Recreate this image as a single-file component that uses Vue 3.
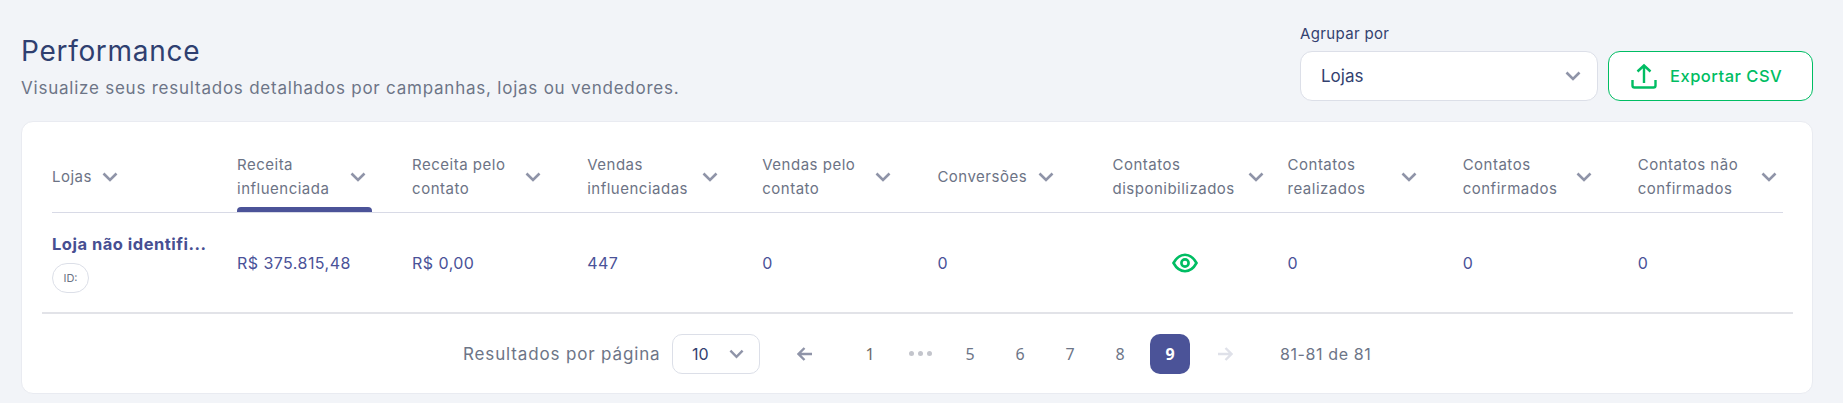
<script setup>
const cols = [
  { lines: ['Lojas'], w: 50 },
  { lines: ['Receita', 'influenciada'], w: 113, active: true },
  { lines: ['Receita pelo', 'contato'], w: 113 },
  { lines: ['Vendas', 'influenciadas'], w: 115 },
  { lines: ['Vendas pelo', 'contato'], w: 113 },
  { lines: ['Conversões'], w: 101 },
  { lines: ['Contatos', 'disponibilizados'], w: 136 },
  { lines: ['Contatos', 'realizados'], w: 113 },
  { lines: ['Contatos', 'confirmados'], w: 113 },
  { lines: ['Contatos não', 'confirmados'], w: 123 },
]
const values = ['R$ 375.815,48', 'R$ 0,00', '447', '0', '0', null, '0', '0', '0']
const pages = ['5', '6', '7', '8']
</script>

<template>
  <div class="page">
    <header class="top">
      <div>
        <h1 class="title">Performance</h1>
        <p class="sub">Visualize seus resultados detalhados por campanhas, lojas ou vendedores.</p>
      </div>
      <div class="controls">
        <div class="field">
          <label class="label">Agrupar por</label>
          <div class="select">
            <span>Lojas</span>
            <svg class="chev" viewBox="0 0 16 10"><path d="M1.5 1.5 8 8l6.5-6.5" /></svg>
          </div>
        </div>
        <button class="export">
          <svg class="upload" viewBox="0 0 26 26" fill="none">
            <path d="M13 20V3M6.5 8.500 13 2.500l6.500 6" />
            <path d="M1.500 17v5.500a2 2 0 0 0 2 2h19a2 2 0 0 0 2-2V17" />
          </svg>
          <span>Exportar CSV</span>
        </button>
      </div>
    </header>

    <section class="card">
      <div class="thead">
        <div v-for="c in cols" :key="c.lines[0] + c.w" class="th">
          <div class="th-label" :style="{ width: c.w + 'px' }">
            <span v-for="l in c.lines" :key="l">{{ l }}</span>
          </div>
          <svg class="chev" viewBox="0 0 16 10"><path d="M1.5 1.5 8 8l6.5-6.5" /></svg>
          <i v-if="c.active" class="bar"></i>
        </div>
      </div>
      <div class="row">
        <div class="store">
          <strong>Loja não identifi...</strong>
          <span class="chip">ID:</span>
        </div>
        <div v-for="(v, i) in values" :key="i" class="td">
          <template v-if="v !== null">{{ v }}</template>
          <svg v-else class="eye" viewBox="0 0 26 20" fill="none">
            <path d="M1.5 10C4.5 4.6 8.4 1.8 13 1.8S21.5 4.6 24.5 10C21.5 15.4 17.6 18.2 13 18.2S4.5 15.4 1.5 10Z" />
            <circle cx="13" cy="10" r="3.6" />
          </svg>
        </div>
      </div>
      <footer class="foot">
        <span class="foot-label">Resultados por página</span>
        <div class="size">
          <span>10</span>
          <svg class="chev" viewBox="0 0 16 10"><path d="M1.5 1.5 8 8l6.5-6.5" /></svg>
        </div>
        <svg class="arrow left" viewBox="0 0 16 14" fill="none"><path d="M15 7H2M7.5 1 1.5 7l6 6" /></svg>
        <span class="pg first">1</span>
        <span class="pg dots"><i></i><i></i><i></i></span>
        <span v-for="p in pages" :key="p" class="pg">{{ p }}</span>
        <span class="pg current">9</span>
        <svg class="arrow right" viewBox="0 0 16 14" fill="none"><path d="M1 7h13M8.500 1l6 6-6 6" /></svg>
        <span class="range">81-81 de 81</span>
      </footer>
    </section>
  </div>
</template>

<style>
html, body { margin: 0; background: #f2f4f8; }
</style>

<style scoped>
.page {
  box-sizing: border-box;
  width: 1843px;
  height: 403px;
  padding: 0 30px 0 21px;
  background: #f2f4f8;
  font-family: Inter, "Liberation Sans", sans-serif;
  overflow: hidden;
}
.top { display: flex; justify-content: space-between; height: 121px; }
.title {
  margin: 33px 0 0;
  font-size: 28px;
  line-height: 36px;
  font-weight: 400;
  color: #2f3f70;
  letter-spacing: 0.7px;
}
.sub {
  margin: 7px 0 0;
  font-size: 17px;
  line-height: 24px;
  color: #6d7587;
  letter-spacing: 0.77px;
}
.controls { display: flex; align-items: flex-end; gap: 10px; height: 101px; box-sizing: border-box; }
.label { display: block; font-size: 15px; line-height: 20px; margin-bottom: 7px; color: #33416f; letter-spacing: 0.35px; }
.select {
  box-sizing: border-box;
  width: 298px;
  height: 50px;
  display: flex;
  align-items: center;
  justify-content: space-between;
  padding: 0 16px 0 20px;
  background: #fff;
  border: 1px solid #dcdfe8;
  border-radius: 12px;
  font-size: 17px;
  color: #33416f;
}
.chev { width: 16px; height: 10px; flex: none; fill: none; stroke: #8f94a8; stroke-width: 2.6; }
.export {
  box-sizing: border-box;
  width: 205px;
  height: 50px;
  display: flex;
  align-items: center;
  padding: 0 0 0 22px;
  gap: 13px;
  background: #fff;
  border: 1px solid #00bd63;
  border-radius: 12px;
  font: 500 16.5px Inter, "Liberation Sans", sans-serif;
  letter-spacing: 0.5px;
  color: #00bd63;
}
.upload { width: 26px; height: 26px; stroke: #00bd63; stroke-width: 2.4; }
.card {
  box-sizing: border-box;
  height: 273px;
  padding: 0 19px 0 20px;
  background: #fff;
  border: 1px solid #e9ebf1;
  border-radius: 12px;
}
.thead, .row {
  display: grid;
  grid-template-columns: 185px repeat(8, 175.1px) 146px;
}
.thead { margin: 0 10px; height: 90px; align-items: end; border-bottom: 1px solid #d8dae6; }
.th { position: relative; display: flex; align-items: center; height: 60px; margin-bottom: 5px; }
.th-label {
  display: flex;
  flex-direction: column;
  flex: none;
  font-size: 15px;
  line-height: 24px;
  letter-spacing: 0.5px;
  color: #6c7385;
}
.th-label span { white-space: nowrap; }
.bar {
  position: absolute;
  left: 0;
  bottom: -5px;
  width: 135px;
  height: 5px;
  border-radius: 4px 4px 0 0;
  background: #4b5398;
}
.row {
  height: 99px;
  padding-left: 10px;
  align-items: center;
  border-bottom: 2px solid #e2e3e8;
}
.store { display: flex; flex-direction: column; align-items: flex-start; gap: 8px; }
.store strong {
  font-size: 16.5px;
  line-height: 22px;
  font-weight: 700;
  letter-spacing: 0.5px;
  color: #474f92;
  white-space: nowrap;
}
.chip {
  box-sizing: border-box;
  width: 37px;
  height: 30px;
  display: flex;
  align-items: center;
  justify-content: center;
  border: 1px solid #dcdfe8;
  border-radius: 15px;
  font-size: 11px;
  color: #6c7385;
}
.td { font-size: 16px; letter-spacing: 0.45px; color: #4a5298; }
.eye { display: block; width: 26px; height: 20px; margin-left: 60px; stroke: #00bd63; stroke-width: 2.6; }
.foot { display: flex; align-items: center; height: 79px; padding-left: 421px; }
.foot-label { width: 209px; flex: none; font-size: 17px; color: #6d7587; letter-spacing: 0.85px; white-space: nowrap; }
.size {
  box-sizing: border-box;
  width: 88px;
  height: 40px;
  display: flex;
  align-items: center;
  justify-content: space-between;
  padding: 0 15px 0 19px;
  border: 1px solid #dcdfe8;
  border-radius: 10px;
  font-size: 16px;
  color: #33416f;
}
.size .chev { width: 15px; }
.arrow { width: 16px; height: 14px; flex: none; stroke-width: 2.4; }
.arrow.left { margin: 0 37px 0 37px; stroke: #8f94a8; }
.arrow.right { margin: 0 47px 0 27px; stroke: #dfe1e9; }
.pg {
  width: 40px;
  height: 40px;
  margin-right: 10px;
  display: flex;
  align-items: center;
  justify-content: center;
  font-family: "Noto Sans", sans-serif;
  font-size: 16px;
  color: #6d7587;
  flex: none;
}
.pg.first { color: #6d6a6a; }
.dots { gap: 4px; }
.dots i { width: 5px; height: 5px; border-radius: 50%; background: #c3c5cc; }
.current {
  margin-right: 0;
  border-radius: 10px;
  background: #4b5398;
  color: #fff;
  font-weight: 700;
}
.range { font-size: 16px; letter-spacing: 0.6px; color: #6d7587; white-space: nowrap; }
</style>
